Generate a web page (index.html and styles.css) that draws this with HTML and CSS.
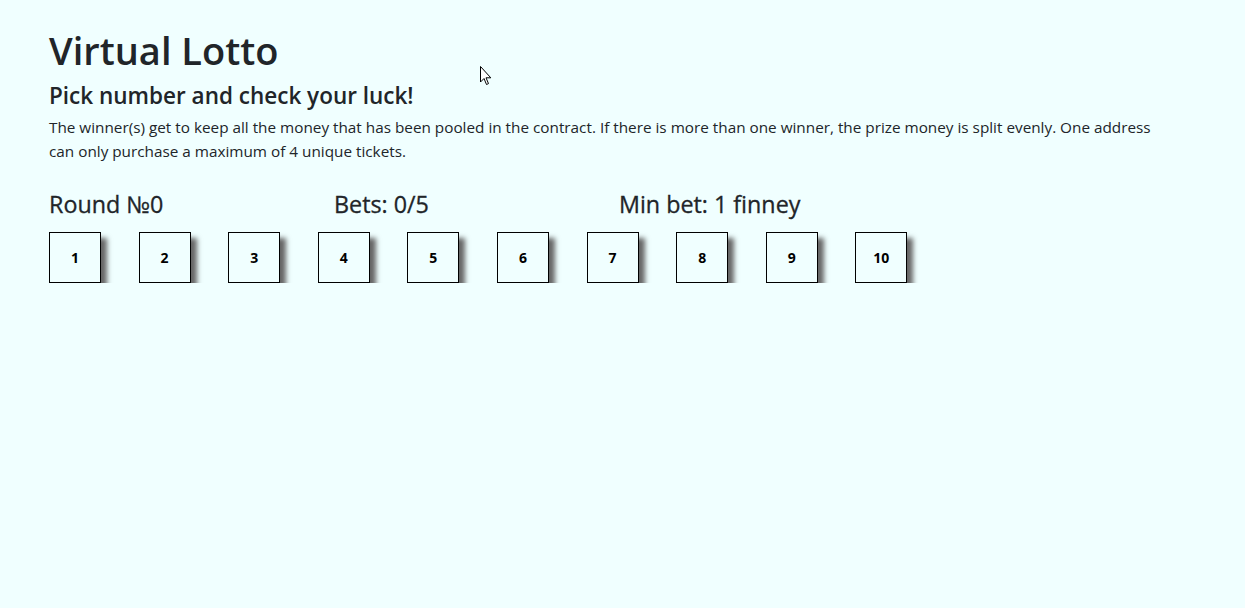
FILE: index.html
```html
<!DOCTYPE html>
<html>
<head>
<meta charset="utf-8">
<link rel="stylesheet" href="styles.css">
</head>
<body>
<div class="page">
  <h1 class="title">Virtual Lotto</h1>
  <h3 class="subtitle">Pick number and check your luck!</h3>
  <p class="lead-text">The winner(s) get to keep all the money that has been pooled in the contract. If there is more than one winner, the prize money is split evenly. One address can only purchase a maximum of 4 unique tickets.</p>
  <div class="stats">
    <h4 class="stat">Round №0</h4>
    <h4 class="stat">Bets: 0/5</h4>
    <h4 class="stat">Min bet: 1 finney</h4>
  </div>
  <div class="numbers">
    <div class="num">1</div>
    <div class="num">2</div>
    <div class="num">3</div>
    <div class="num">4</div>
    <div class="num">5</div>
    <div class="num">6</div>
    <div class="num">7</div>
    <div class="num">8</div>
    <div class="num">9</div>
    <div class="num">10</div>
  </div>
</div>
<svg class="cursor" width="13" height="20" viewBox="0 0 13 20"><path d="M0.5 0.5 L0.5 16 L4 12.5 L6.5 18.5 L8.5 17.6 L6 11.8 L10.8 11.8 Z" fill="#fff" stroke="#000" stroke-width="1"/></svg>
</body>
</html>
```
FILE: styles.css
```css
html, body {
  margin: 0;
  padding: 0;
  background: #f0ffff;
}
body {
  font-family: "Open Sans", "Noto Sans", sans-serif;
  color: #212529;
}
.page {
  padding: 26px 0 0 49px;
  width: 1110px;
}
.title {
  margin: 0;
  font-size: 38px;
  font-weight: 600;
  line-height: 48px;
}
.subtitle {
  margin: 8px 0 0;
  font-size: 22.5px;
  font-weight: 600;
  line-height: 28px;
}
.lead-text {
  margin: 5px 0 0;
  font-size: 15.3px;
  line-height: 24px;
}
.stats {
  display: flex;
  margin-top: 26px;
}
.stat {
  margin: 0;
  width: 285px;
  font-size: 23.3px;
  font-weight: 500;
  line-height: 30px;
  -webkit-text-stroke: 0.3px #212529;
}
.numbers {
  display: flex;
  gap: 37.6px;
  margin-top: 13px;
}
.num {
  width: 50px;
  height: 49px;
  border: 1px solid #000;
  background: #f0ffff;
  display: flex;
  align-items: center;
  justify-content: center;
  font-size: 14px;
  font-weight: 700;
  color: #000;
  box-shadow: 6px 6px 5px #666;
}
.cursor {
  position: absolute;
  left: 480px;
  top: 66px;
}
```
